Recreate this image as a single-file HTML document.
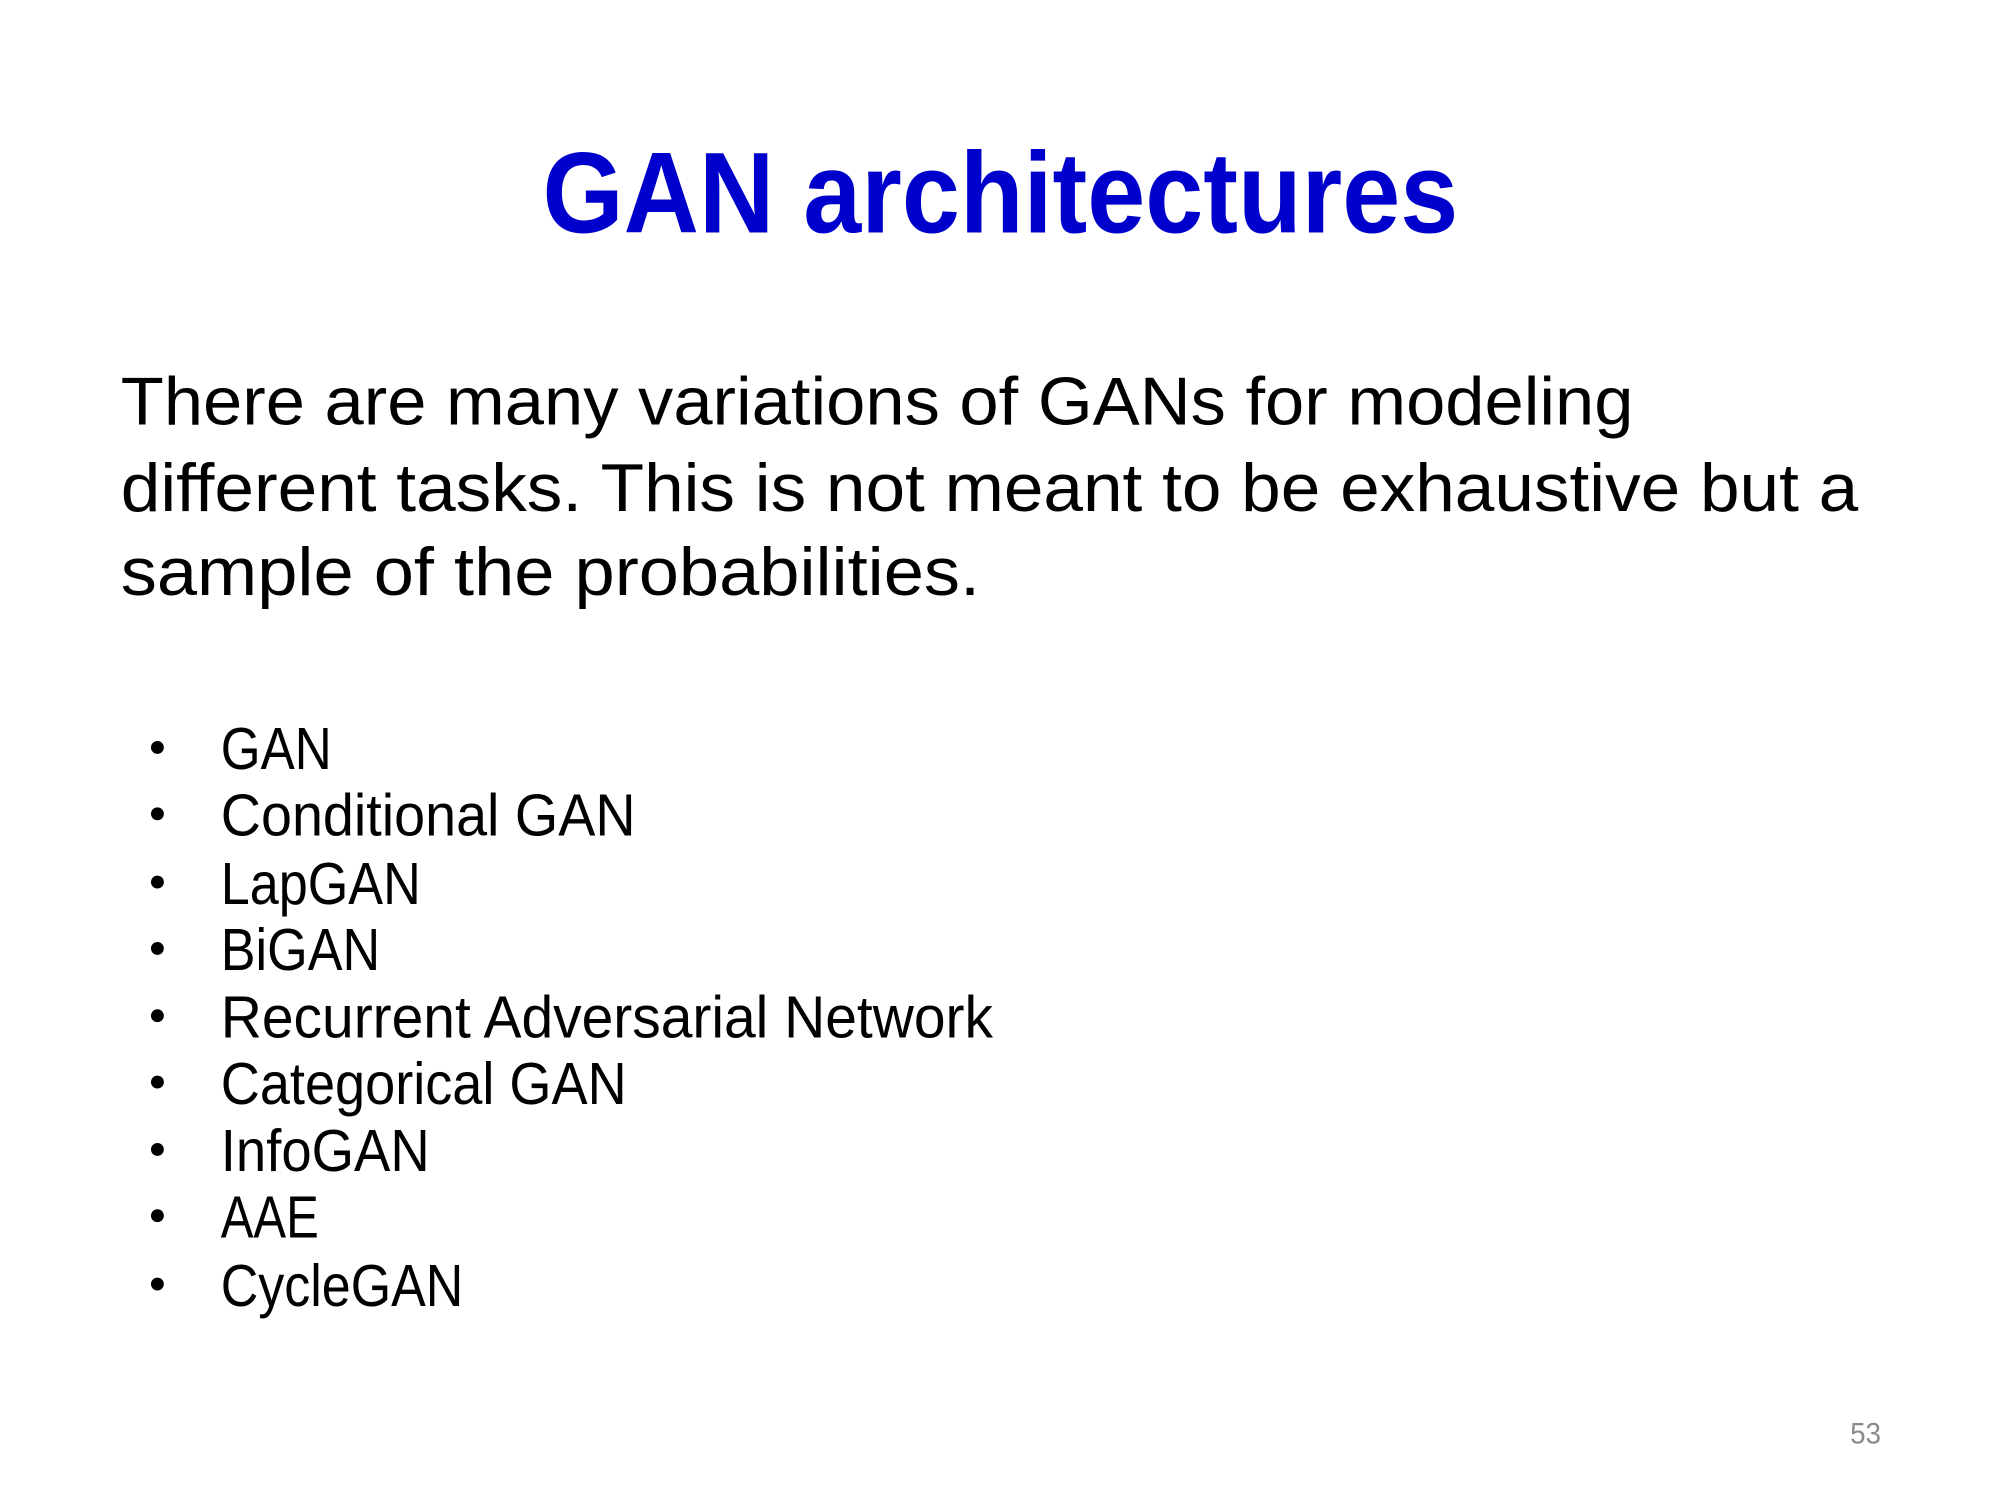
<!DOCTYPE html>
<html><head><style>html,body{margin:0;padding:0;background:#fff}svg{display:block}</style></head>
<body>
<svg width="2000" height="1500" viewBox="0 0 2000 1500" xmlns="http://www.w3.org/2000/svg" font-family="Liberation Sans, sans-serif">
<g transform="scale(0.99)">
<text x="548" y="235" font-size="116" font-weight="bold" fill="#0000CC" textLength="925" lengthAdjust="spacingAndGlyphs">GAN architectures</text>
<g font-size="68" fill="#000">
<text x="122" y="429" textLength="1528" lengthAdjust="spacingAndGlyphs">There are many variations of GANs for modeling</text>
<text x="122" y="516" textLength="1755" lengthAdjust="spacingAndGlyphs">different tasks. This is not meant to be exhaustive but a</text>
<text x="122" y="601" textLength="868" lengthAdjust="spacingAndGlyphs">sample of the probabilities.</text>
</g>
<g font-size="60" fill="#000">
<circle cx="159" cy="755" r="6.5"/><text x="223" y="777" textLength="112" lengthAdjust="spacingAndGlyphs">GAN</text>
<circle cx="159" cy="822" r="6.5"/><text x="223" y="844" textLength="419" lengthAdjust="spacingAndGlyphs">Conditional GAN</text>
<circle cx="159" cy="891" r="6.5"/><text x="223" y="913" textLength="202" lengthAdjust="spacingAndGlyphs">LapGAN</text>
<circle cx="159" cy="958" r="6.5"/><text x="223" y="980" textLength="161" lengthAdjust="spacingAndGlyphs">BiGAN</text>
<circle cx="159" cy="1026" r="6.5"/><text x="223" y="1048" textLength="780" lengthAdjust="spacingAndGlyphs">Recurrent Adversarial Network</text>
<circle cx="159" cy="1093" r="6.5"/><text x="223" y="1115" textLength="410" lengthAdjust="spacingAndGlyphs">Categorical GAN</text>
<circle cx="159" cy="1161" r="6.5"/><text x="223" y="1183" textLength="211" lengthAdjust="spacingAndGlyphs">InfoGAN</text>
<circle cx="159" cy="1228" r="6.5"/><text x="223" y="1250" textLength="99" lengthAdjust="spacingAndGlyphs">AAE</text>
<circle cx="159" cy="1297" r="6.5"/><text x="223" y="1319" textLength="245" lengthAdjust="spacingAndGlyphs">CycleGAN</text>
</g>
<text x="1869" y="1458" font-size="30" fill="#8a8a8a" textLength="31" lengthAdjust="spacingAndGlyphs">53</text>
</g>
</svg>
</body></html>
